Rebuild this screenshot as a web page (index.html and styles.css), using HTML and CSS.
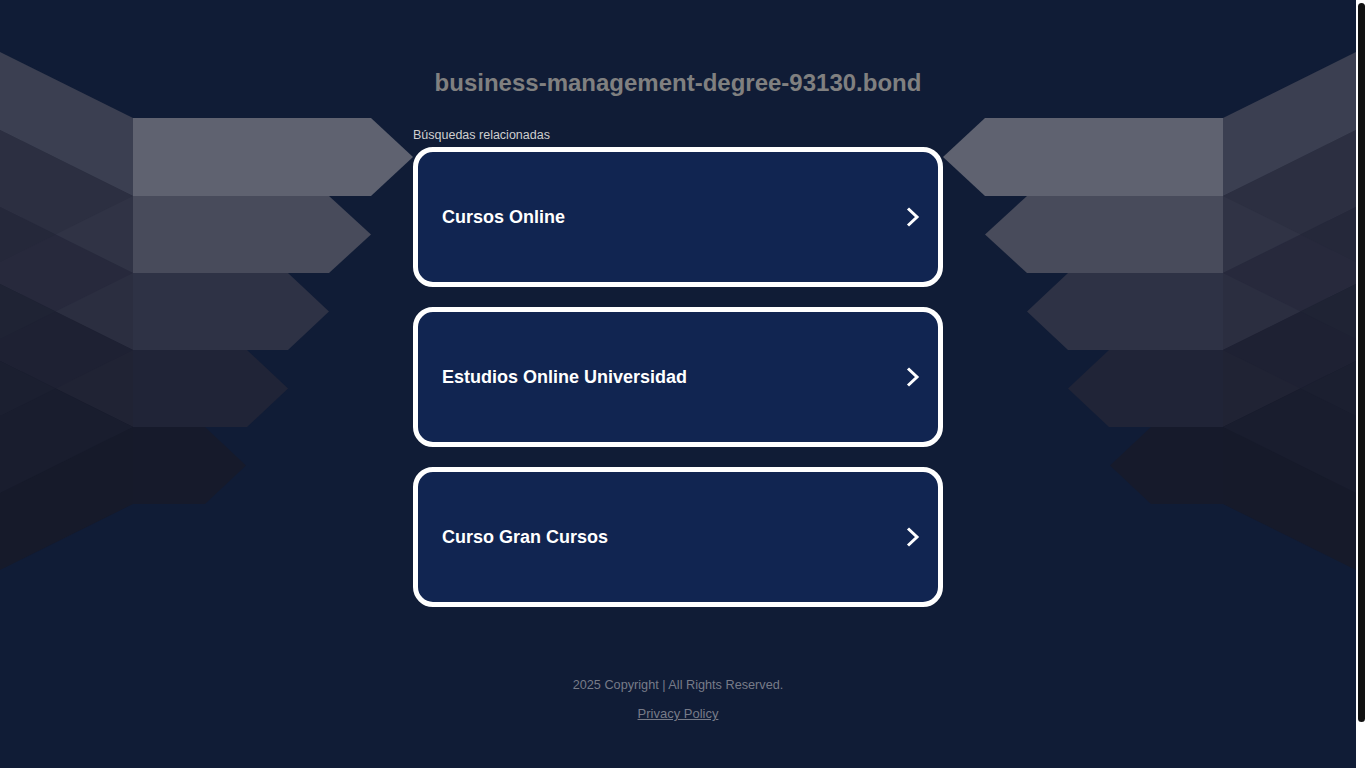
FILE: index.html
```html
<!DOCTYPE html>
<html lang="es">
<head>
<meta charset="utf-8">
<title>business-management-degree-93130.bond</title>
<link rel="stylesheet" href="styles.css">
</head>
<body>
<div class="viewport">
  <div class="bg" aria-hidden="true">
    <svg class="wing wing-left" viewBox="0 0 420 600" width="420" height="600">
      <defs>
        <polygon id="w0" points="0,52 133,118 133,196 0,262"/>
        <polygon id="w1" points="0,130 133,196 133,273 0,339"/>
        <polygon id="w2" points="0,207 133,273 133,350 0,416"/>
        <polygon id="w3" points="0,284 133,350 133,427 0,493"/>
        <polygon id="w4" points="0,361 133,427 133,504 0,570"/>
        <clipPath id="c0"><use href="#w0"/></clipPath>
        <clipPath id="c1"><use href="#w1"/></clipPath>
        <clipPath id="c2"><use href="#w2"/></clipPath>
        <clipPath id="c3"><use href="#w3"/></clipPath>
      </defs>
      <g id="wing">
        <use href="#w0" fill="#3b3f51"/>
        <use href="#w1" fill="#303345"/>
        <use href="#w2" fill="#2b2e40"/>
        <use href="#w3" fill="#202334"/>
        <use href="#w4" fill="#161a2a"/>
        <g clip-path="url(#c0)"><use href="#w1" fill="#2c2f41"/></g>
        <g clip-path="url(#c1)"><use href="#w2" fill="#27293c"/></g>
        <g clip-path="url(#c2)"><use href="#w3" fill="#1e2133"/></g>
        <g clip-path="url(#c3)"><use href="#w4" fill="#191d2e"/></g>
        <g clip-path="url(#c0)"><g clip-path="url(#c1)"><use href="#w2" fill="#25283a"/></g></g>
        <g clip-path="url(#c1)"><g clip-path="url(#c2)"><use href="#w3" fill="#1f2334"/></g></g>
        <g clip-path="url(#c2)"><g clip-path="url(#c3)"><use href="#w4" fill="#1b1f30"/></g></g>
        <polygon points="133,118 371,118 413,157 371,196 133,196" fill="#5f6270"/>
        <polygon points="133,196 329,196 371,234.5 329,273 133,273" fill="#484b5b"/>
        <polygon points="133,273 288,273 329,311.5 288,350 133,350" fill="#2e3245"/>
        <polygon points="133,350 247,350 288,388.5 247,427 133,427" fill="#202437"/>
        <polygon points="133,427 205,427 246,465.5 205,504 133,504" fill="#161a2b"/>
      </g>
    </svg>
    <svg class="wing wing-right" viewBox="0 0 420 600" width="420" height="600">
      <use href="#wing"/>
    </svg>
  </div>

  <main class="page">
    <h1 class="domain">business-management-degree-93130.bond</h1>
    <p class="label">Búsquedas relacionadas</p>
    <div class="cards">
      <a class="card" href="#">
        <span>Cursos Online</span>
        <svg class="chev" viewBox="0 0 14 20" width="14" height="20"><path d="M2 1.5 L11 10 L2 18.5" fill="none" stroke="#fff" stroke-width="3"/></svg>
      </a>
      <a class="card" href="#">
        <span>Estudios Online Universidad</span>
        <svg class="chev" viewBox="0 0 14 20" width="14" height="20"><path d="M2 1.5 L11 10 L2 18.5" fill="none" stroke="#fff" stroke-width="3"/></svg>
      </a>
      <a class="card" href="#">
        <span>Curso Gran Cursos</span>
        <svg class="chev" viewBox="0 0 14 20" width="14" height="20"><path d="M2 1.5 L11 10 L2 18.5" fill="none" stroke="#fff" stroke-width="3"/></svg>
      </a>
    </div>
  </main>

  <footer class="footer">
    <p>2025 Copyright | All Rights Reserved.</p>
    <a class="privacy" href="#">Privacy Policy</a>
  </footer>
</div>
<div class="scrollbar" aria-hidden="true"><div class="thumb"></div></div>
</body>
</html>
```

FILE: styles.css
```css
html {
  background: #101c36;
}

body {
  margin: 0;
  background: #101c36;
  font-family: Arial, "Liberation Sans", sans-serif;
  overflow: hidden;
}

.viewport {
  position: relative;
  margin-right: 10px;
  height: 768px;
  overflow: hidden;
}

.scrollbar {
  position: fixed;
  top: 0;
  right: 0;
  width: 10px;
  height: 768px;
  background: #ffffff;
}

.thumb {
  position: absolute;
  top: 3px;
  left: 2px;
  right: 1px;
  height: 719px;
  background: #111111;
  border-radius: 4px;
}

.bg {
  position: absolute;
  top: 0;
  left: 0;
  right: 0;
  height: 768px;
  overflow: hidden;
  pointer-events: none;
}

.wing {
  position: absolute;
  top: 0;
  width: 420px;
  height: 600px;
  display: block;
}

.wing-left {
  left: 0;
}

.wing-right {
  right: 0;
  transform: scaleX(-1);
}

.page {
  position: relative;
  width: 530px;
  margin: 0 auto;
  padding-top: 69px;
}

.domain {
  margin: 0;
  text-align: center;
  font-size: 24px;
  line-height: 28px;
  font-weight: bold;
  color: #808080;
  white-space: nowrap;
}

.label {
  margin: 31px 0 5px;
  font-size: 12.5px;
  line-height: 14px;
  color: #cfcfcf;
}

.cards {
  display: flex;
  flex-direction: column;
  gap: 20px;
}

.card {
  box-sizing: border-box;
  height: 140px;
  display: flex;
  align-items: center;
  justify-content: space-between;
  padding: 0 18px 0 24px;
  border: 5px solid #ffffff;
  border-radius: 20px;
  background: #112551;
  color: #ffffff;
  text-decoration: none;
  font-size: 18px;
  font-weight: bold;
}

.chev {
  display: block;
  flex: none;
}

.footer {
  position: relative;
  margin-top: 71px;
  text-align: center;
  font-size: 12.7px;
  line-height: 15px;
  color: #777b88;
}

.footer p {
  margin: 0;
}

.privacy {
  display: inline-block;
  margin-top: 13px;
  font-size: 13px;
  color: #777b88;
  text-decoration: underline;
}
```
